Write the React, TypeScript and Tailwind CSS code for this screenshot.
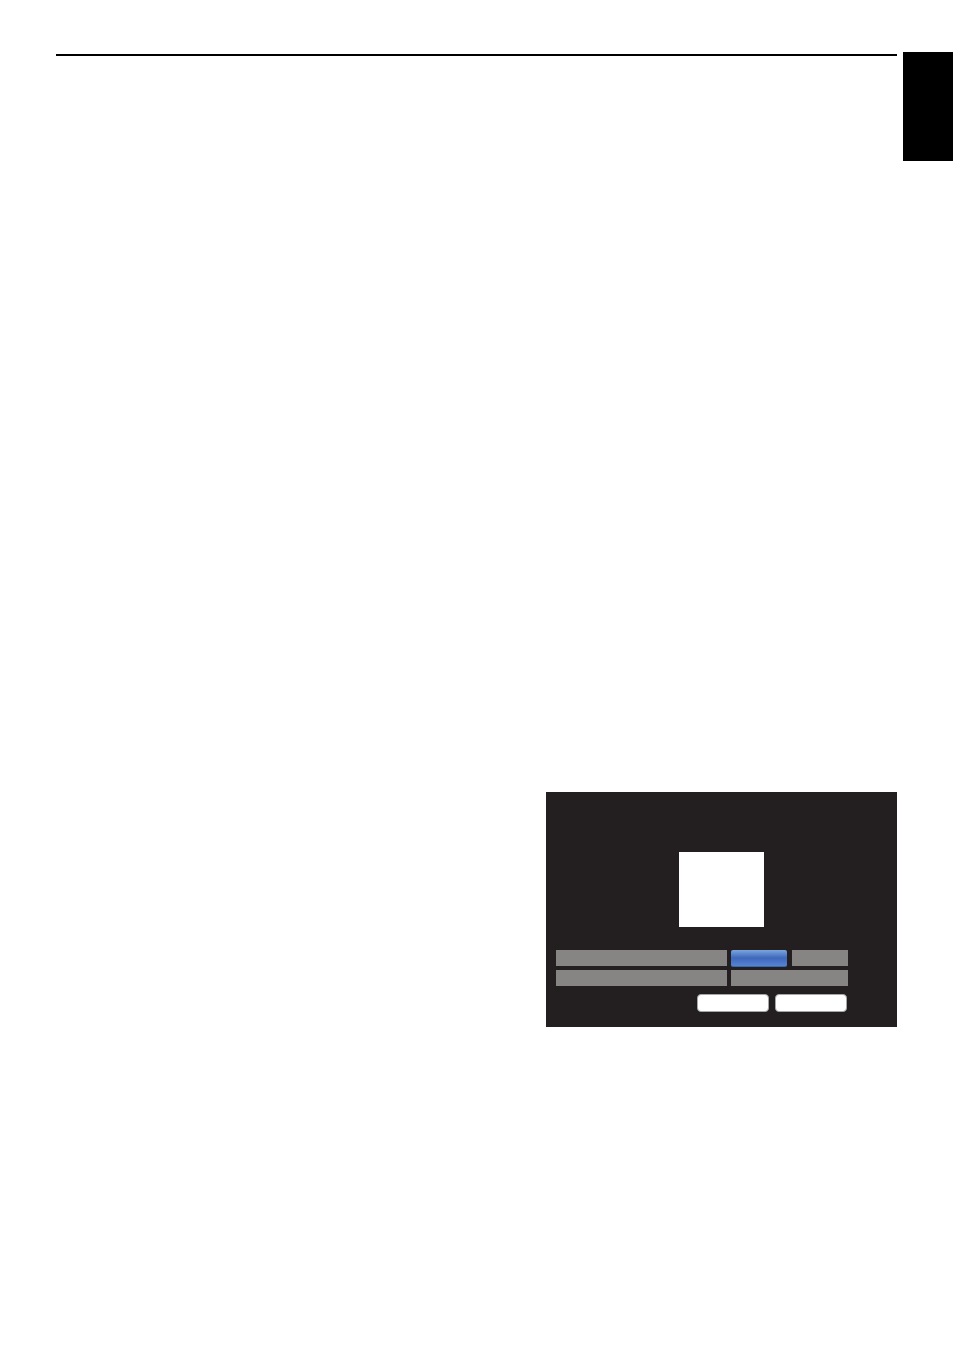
function DisplayPanel() {
  return (
    <section className="w-[351px] bg-[#231f20] pt-15 pr-12 pb-[15px] pl-[10px]">
      <div className="ml-[123px] h-[75px] w-[85px] bg-white" />

      <div className="mt-[23px] mr-px flex flex-col gap-1">
        <div className="flex h-4 gap-1">
          <div className="flex-1 bg-[#878484]" />
          <div className="flex w-[117px] justify-between">
            <button
              type="button"
              aria-label="Selected value"
              className="h-[17px] w-14 rounded-[2px] border-b border-[#3a68a8] bg-linear-to-b from-[#7ba5e0] via-[#3f68bb] to-[#5584d2]"
            />
            <div className="h-4 w-14 bg-[#878484]" />
          </div>
        </div>
        <div className="flex h-4 gap-1">
          <div className="flex-1 bg-[#878484]" />
          <div className="w-[117px] bg-[#878484]" />
        </div>
      </div>

      <div className="mt-2 mr-[2px] flex justify-end gap-[6px]">
        <button
          type="button"
          aria-label="Confirm"
          className="h-[18px] w-[72px] rounded-[4px] border border-[#a5a7a7] bg-white"
        />
        <button
          type="button"
          aria-label="Cancel"
          className="h-[18px] w-[72px] rounded-[4px] border border-[#a5a7a7] bg-white"
        />
      </div>
    </section>
  )
}

export default function App() {
  return (
    <div className="min-h-screen bg-white font-['Liberation_Sans',sans-serif]">
      <header className="flex items-start gap-[6px] pt-[52px] pr-px pl-14">
        <hr className="mt-[2px] flex-1 border-t-2 border-black" />
        <div className="h-[109px] w-[50px] bg-black" />
      </header>

      <main className="flex justify-end pt-[631px] pr-[57px]">
        <DisplayPanel />
      </main>
    </div>
  )
}
